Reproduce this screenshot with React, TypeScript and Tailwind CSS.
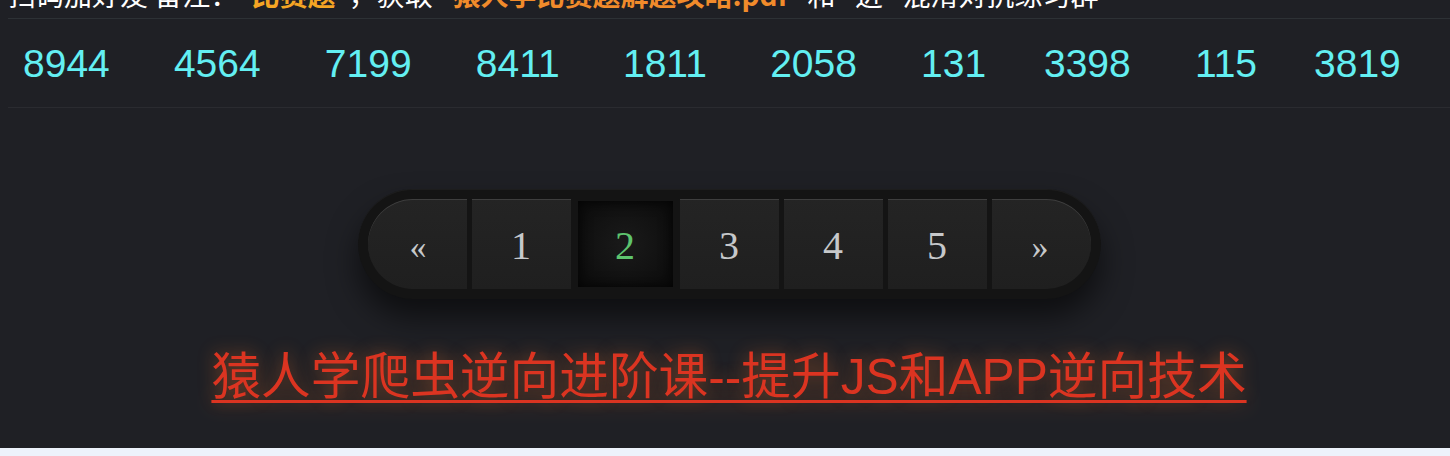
import React from "react";

const numbers = ["8944", "4564", "7199", "8411", "1811", "2058", "131", "3398", "115", "3819"];
const pages = ["1", "2", "3", "4", "5"];

export default function App() {
  return (
    <div className="h-[456px] w-[1450px] overflow-hidden bg-[#edf2fb]">
      <div className="h-[448px] overflow-hidden bg-[#1f2025] pl-2">
        {/* tip line, scrolled mostly out of view */}
        <div className="mt-[-27px] whitespace-nowrap pb-[3px] text-[28px] leading-[42px] text-white [font-family:'Noto_Sans_CJK_SC','Liberation_Sans',sans-serif]">
          扫码加好友 备注："<b className="text-[#f5a524]">比赛题</b>"，获取 "<b className="text-[#f18b2b]">猿人学比赛题解题攻略.pdf</b>" 和 "进" 混淆对抗练习群
        </div>

        <table className="w-full border-collapse border-t border-[#2d3135]">
          <tbody>
            <tr className="border-b border-[#2a2b30]">
              {numbers.map((n, i) => (
                <td
                  key={i}
                  className="h-[89px] px-[15px] pt-[3px] text-left text-[39px] font-light text-[#63eff2] [font-family:'Liberation_Sans',Arial,sans-serif]"
                >
                  {n}
                </td>
              ))}
            </tr>
          </tbody>
        </table>

        {/* pager */}
        <div className="mt-[81px] flex justify-center">
          <div className="flex gap-[5px] rounded-full bg-[#141414] p-[10px] shadow-[0_18px_30px_rgba(0,0,0,0.55),inset_0_1px_0_rgba(255,255,255,0.04)]">
            <PageBtn label="«" first />
            {pages.map((p) =>
              p === "2" ? (
                <div
                  key={p}
                  className="mx-[2px] my-[2px] flex h-[86px] w-[95px] items-center justify-center bg-[radial-gradient(circle,#1a1a1a_0%,#0e0e0e_80%)] pt-[4px] text-[40px] text-[#5ec46e] shadow-[inset_0_0_14px_rgba(0,0,0,0.9)] [font-family:'Liberation_Serif',serif]"
                >
                  {p}
                </div>
              ) : (
                <PageBtn key={p} label={p} />
              )
            )}
            <PageBtn label="»" last />
          </div>
        </div>

        <div className="mt-[48px] text-center">
          <a
            href="#"
            className="text-[49.7px] leading-[60px] text-[#db3421] underline decoration-[3px] underline-offset-[6px] [font-family:'Liberation_Sans','Noto_Sans_CJK_SC',sans-serif] [text-shadow:0_0_18px_rgba(255,120,40,0.45)]"
          >
            猿人学爬虫逆向进阶课--提升JS和APP逆向技术
          </a>
        </div>
      </div>
    </div>
  );
}

function PageBtn({ label, first, last }: { label: string; first?: boolean; last?: boolean }) {
  return (
    <div
      className={`flex h-[90px] w-[99px] items-center justify-center bg-gradient-to-b from-[#242424] to-[#1f1f1f] pt-[4px] text-[#c6c8ca] shadow-[inset_0_1px_0_rgba(255,255,255,0.12)] [font-family:'Liberation_Serif',serif] ${
        first ? "rounded-l-[45px] pl-[2px]" : ""
      } ${last ? "rounded-r-[45px] pr-[2px]" : ""} ${first || last ? "text-[34px]" : "text-[40px]"}`}
    >
      {label}
    </div>
  );
}
